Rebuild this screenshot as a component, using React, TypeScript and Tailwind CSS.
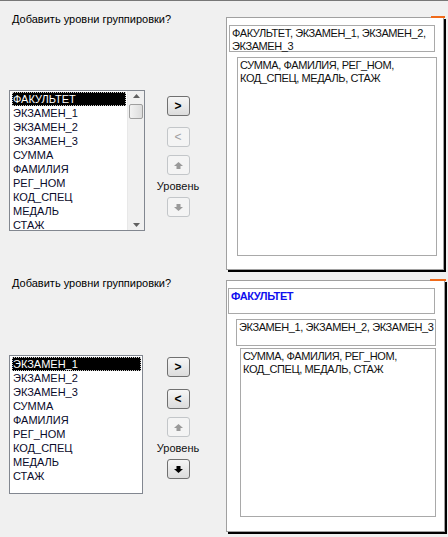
import React from 'react';

const font = { fontFamily: '"Liberation Sans", Arial, sans-serif' };

function Arrow({ up, disabled }: { up: boolean; disabled?: boolean }) {
    const c = disabled ? '#9a9a9a' : '#000';
    return (
        <svg width="9" height="7" viewBox="0 0 9 7" className={up ? '' : 'rotate-180'}>
            <path d="M4.5 0 L9 4 L6.5 4 L6.5 7 L2.5 7 L2.5 4 L0 4 Z" fill={c} />
        </svg>
    );
}

function Btn({ children, disabled }: { children: React.ReactNode; disabled?: boolean }) {
    return (
        <div
            className={
                'w-[23px] h-[20px] rounded-[3px] border flex items-center justify-center text-[12px] font-bold leading-none ' +
                (disabled
                    ? 'border-[#c3c6c9] bg-[#f4f4f4] text-[#a0a0a0] font-normal'
                    : 'border-[#707070] bg-gradient-to-b from-[#f6f6f6] to-[#dcdcdc] text-black')
            }
        >
            {children}
        </div>
    );
}

function ListBox({ items, scroll, h, w }: { items: string[]; scroll?: boolean; h: string; w: string }) {
    return (
        <div className={'border border-[#828790] bg-white flex ' + w + ' ' + h}>
            <div className="flex-1 pt-[1px] pl-[2px] pr-[1px]">
                {items.map((it, i) => (
                    <div
                        key={it}
                        className={
                            'h-[14px] leading-[14px] text-[11px] pl-[1px] ' +
                            (i === 0 ? 'bg-black text-white outline-1 outline-dotted outline-offset-[-1px] outline-[#ccc]' : 'text-[#0a0a2a]')
                        }
                    >
                        {it}
                    </div>
                ))}
            </div>
            {scroll && (
                <div className="w-[17px] bg-[#f0f0f0] flex flex-col items-center justify-between py-[3px] border-l border-[#e8e8e8]">
                    <div className="flex flex-col items-center">
                        <svg width="7" height="4" viewBox="0 0 7 4"><path d="M3.5 0 L7 4 L0 4Z" fill="#606060" /></svg>
                        <div className="w-[14px] h-[15px] mt-[6px] border border-[#9e9e9e] rounded-[2px] bg-gradient-to-r from-[#f2f2f2] to-[#dcdcdc]" />
                    </div>
                    <svg width="7" height="4" viewBox="0 0 7 4"><path d="M0 0 L7 0 L3.5 4Z" fill="#606060" /></svg>
                </div>
            )}
        </div>
    );
}

function Controls({ lessOn, downOn, gaps }: { lessOn?: boolean; downOn?: boolean; gaps: string[] }) {
    return (
        <div className="flex flex-col items-center w-[48px] text-[11px]">
            <Btn>&gt;</Btn>
            <div className={gaps[0]} />
            <Btn disabled={!lessOn}>&lt;</Btn>
            <div className={gaps[1]} />
            <Btn disabled>
                <Arrow up disabled />
            </Btn>
            <div className="h-[22px] leading-[22px] text-[#111]">Уровень</div>
            <Btn disabled={!downOn}>
                <Arrow up={false} disabled={!downOn} />
            </Btn>
        </div>
    );
}

function Box({ cls, children }: { cls: string; children?: React.ReactNode }) {
    return (
        <div className={'border border-[#a9a9a9] bg-white text-[11px] leading-[13px] tracking-[-0.4px] px-[2px] pt-[1px] ' + cls}>
            {children}
        </div>
    );
}

const list1 = ['ФАКУЛЬТЕТ', 'ЭКЗАМЕН_1', 'ЭКЗАМЕН_2', 'ЭКЗАМЕН_3', 'СУММА', 'ФАМИЛИЯ', 'РЕГ_НОМ', 'КОД_СПЕЦ', 'МЕДАЛЬ', 'СТАЖ'];
const list2 = list1.slice(1);

export default function App(): JSX.Element {
    return (
        <div className="w-[448px] h-[537px] bg-[#f0f0f0] overflow-hidden text-black" style={font}>
            <div className="h-[1px] bg-[#777]" />
            <div className="flex h-[271px]">
                <div className="w-[226px] pl-[9px] flex flex-col">
                    <p className="mt-[11px] ml-[3px] text-[11px] leading-[14px]">Добавить уровни группировки?</p>
                    <div className="mt-[64px] flex items-start">
                        <ListBox items={list1} scroll w="w-[136px]" h="h-[141px]" />
                        <div className="mt-[6px] ml-[9px]">
                            <Controls gaps={['h-[11px]', 'h-[8px]']} />
                        </div>
                    </div>
                </div>
                <div className="mt-[16px] w-[218px] h-[253px] bg-white border border-[#a0a0a0] shadow-[2px_2px_0_#000] pl-[2px] pt-[7px]">
                    <Box cls="w-[206px] h-[27px] text-[#111]">ФАКУЛЬТЕТ, ЭКЗАМЕН_1, ЭКЗАМЕН_2, ЭКЗАМЕН_3</Box>
                    <Box cls="ml-[8px] mt-[5px] w-[200px] h-[199px] text-[#111]">
                        СУММА, ФАМИЛИЯ, РЕГ_НОМ, КОД_СПЕЦ, МЕДАЛЬ, СТАЖ
                    </Box>
                </div>
                <div className="mt-[15px] ml-[-13px] w-[14px] h-[2px] bg-[#f06a1a]" />
            </div>
            <div className="flex h-[265px]">
                <div className="w-[226px] pl-[9px] flex flex-col">
                    <p className="mt-[4px] ml-[3px] text-[11px] leading-[14px]">Добавить уровни группировки?</p>
                    <div className="mt-[65px] flex items-start">
                        <ListBox items={list2} w="w-[134px]" h="h-[139px]" />
                        <div className="mt-[2px] ml-[11px]">
                            <Controls lessOn downOn gaps={['h-[12px]', 'h-[8px]']} />
                        </div>
                    </div>
                </div>
                <div className="mt-[8px] w-[219px] h-[252px] bg-white border border-[#a0a0a0] shadow-[2px_2px_0_#000] pl-[1px] pt-[7px]">
                    <Box cls="w-[207px] h-[26px] font-bold text-[#1010ee]">ФАКУЛЬТЕТ</Box>
                    <Box cls="ml-[8px] mt-[5px] w-[200px] h-[27px] text-[#111] whitespace-nowrap overflow-hidden">
                        ЭКЗАМЕН_1, ЭКЗАМЕН_2, ЭКЗАМЕН_3
                    </Box>
                    <Box cls="ml-[12px] mt-[2px] w-[196px] h-[169px] text-[#111]">
                        СУММА, ФАМИЛИЯ, РЕГ_НОМ, КОД_СПЕЦ, МЕДАЛЬ, СТАЖ
                    </Box>
                </div>
                <div className="mt-[7px] ml-[-15px] w-[16px] h-[2px] bg-[#f06a1a]" />
            </div>
        </div>
    );
}
